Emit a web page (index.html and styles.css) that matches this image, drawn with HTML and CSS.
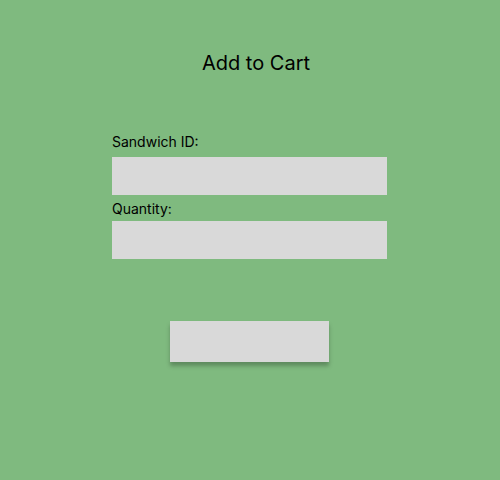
FILE: index.html
```html
<!DOCTYPE html>
<html lang="en">
<head>
<meta charset="utf-8">
<title>Add to Cart</title>
<link rel="stylesheet" href="styles.css">
</head>
<body>
<main class="page">
  <h1 class="title">Add to Cart</h1>
  <form class="form">
    <label class="label label-first" for="sid">Sandwich ID:</label>
    <input class="field field-first" id="sid" type="text">
    <label class="label label-second" for="qty">Quantity:</label>
    <input class="field" id="qty" type="text">
    <button class="submit" type="button"></button>
  </form>
</main>
</body>
</html>
```

FILE: styles.css
```css
html, body {
  margin: 0;
  padding: 0;
}

body {
  background: #7fba7f;
  font-family: Inter, "Noto Sans", "Liberation Sans", sans-serif;
  color: #000;
}

.page {
  width: 500px;
  height: 480px;
  display: flex;
  flex-direction: column;
}

.title {
  margin: 51px 0 0;
  padding-left: 12px;
  font-size: 20px;
  line-height: 24px;
  font-weight: 400;
  text-align: center;
}

.form {
  width: 275px;
  margin: 0 0 0 112px;
  display: flex;
  flex-direction: column;
}

.label {
  font-size: 14px;
  line-height: 18px;
  height: 18px;
}

.label-first {
  margin-top: 58px;
  margin-bottom: 6px;
}

.label-second {
  margin-top: 5px;
  margin-bottom: 3px;
}

.field {
  box-sizing: border-box;
  width: 275px;
  height: 38px;
  margin: 0;
  padding: 0 8px;
  border: none;
  background: #d9d9d9;
  font: inherit;
  outline: none;
}

.submit {
  align-self: center;
  width: 159px;
  height: 41px;
  margin-top: 62px;
  padding: 0;
  border: none;
  background: #d9d9d9;
  box-shadow: 0 4px 4px rgba(0, 0, 0, 0.25);
}
```
